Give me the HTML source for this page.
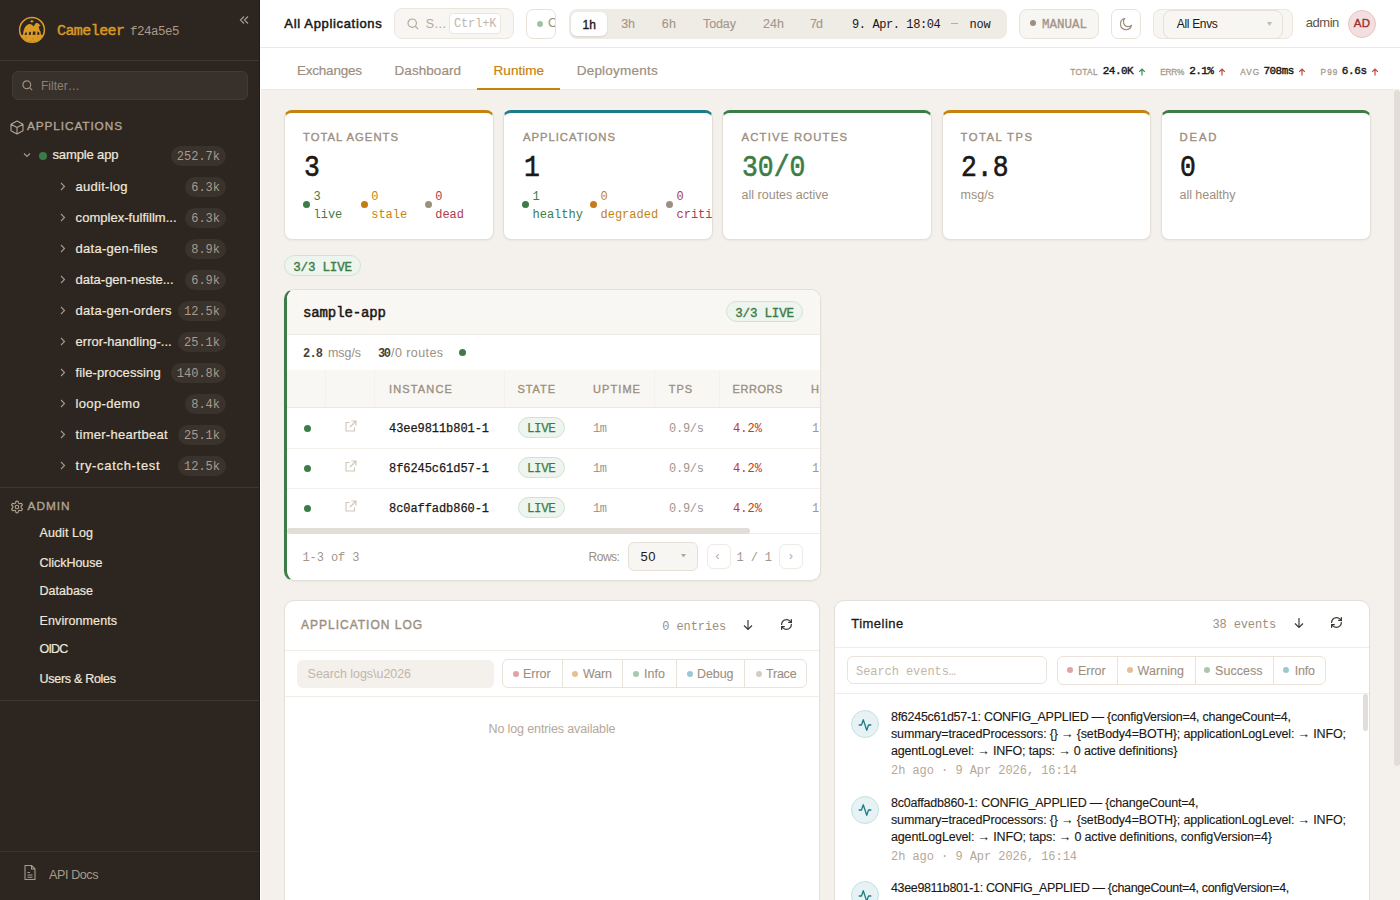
<!DOCTYPE html>
<html><head><meta charset="utf-8"><title>Cameleer Runtime</title>
<style>
*{box-sizing:border-box;margin:0;padding:0}
html,body{width:1400px;height:900px;overflow:hidden;background:#f4f1ec;font-family:"Liberation Sans",sans-serif;color:#1c1814;position:relative}
.t{position:absolute;white-space:nowrap}
.b{position:absolute}
svg{position:absolute;overflow:visible}
</style></head><body>
<div class="b" style="left:0px;top:0px;width:260px;height:900px;background:#2c2520"></div>
<div class="b" style="left:259px;top:0px;width:1px;height:900px;background:#221c18"></div>
<div class="b" style="left:0px;top:60px;width:259px;height:1px;background:#3e362f"></div>
<svg style="left:18px;top:16px" width="28" height="28" viewBox="18 16 28 28">
<defs><clipPath id="lc"><circle cx="32" cy="29.9" r="12"/></clipPath></defs>
<circle cx="32" cy="29.9" r="12.4" fill="none" stroke="#dc9b26" stroke-width="1.5"/>
<g clip-path="url(#lc)" fill="#dc9b26">
<rect x="18" y="34.8" width="28" height="10"/><g fill="#9c6a1a" opacity="0.55"><circle cx="26" cy="37.5" r="0.8"/><circle cx="33" cy="39" r="0.7"/><circle cx="37.5" cy="36.8" r="0.6"/><circle cx="29" cy="28" r="0.9"/><circle cx="35" cy="29.5" r="0.8"/><circle cx="31.5" cy="41" r="0.6"/></g>
<path d="M31.9 19.6 L32.9 21.1 L34.6 21.3 L32.9 21.7 L31.9 23 L31 21.7 L29.3 21.3 L31 21.1Z"/>
<path d="M23.2 33.5 C23.5 29 25.5 25.2 28.5 24.2 C30.8 23.6 32.6 25 33.6 26.4 C34.4 25.2 35.2 23.6 36.3 23 C37.6 22.6 38.5 23.4 39.4 24.4 L40.6 25.6 L39.6 26.3 L38.7 26.6 C38.9 28.4 39.6 30.2 40.5 31.6 L41 35.2 L39.5 35.2 L39.2 32.5 L37.6 31.2 L37.1 35.2 L35.5 35.2 L35.3 31.6 L33 31.6 L32.6 35.2 L31 35.2 L30.8 31.9 L29.2 31.8 L28.6 35.2 L27 35.2 L26.6 32 C25.4 32.4 24.6 33.5 24.6 35.2 L23 35.2Z"/>
</g>
</svg>
<span class="t" style="left:57.00px;top:23.60px;font:15px/1 'Liberation Mono',monospace;color:#d99a24;letter-spacing:-0.571px;-webkit-text-stroke:0.45px #d99a24">Cameleer</span>
<span class="t" style="left:130.00px;top:25.50px;font:12.5px/1 'Liberation Mono',monospace;color:#a99b8b;letter-spacing:-0.500px">f24a5e5</span>
<svg style="left:239px;top:15px" width="10" height="10" viewBox="0 0 10 10"><path d="M5 1.5 L1.5 5 L5 8.5 M9 1.5 L5.5 5 L9 8.5" fill="none" stroke="#a99b8b" stroke-width="1.2"/></svg>
<div class="b" style="left:12px;top:71px;width:236px;height:29px;background:#38312b;border:1px solid #433a33;border-radius:6px"></div>
<svg style="left:22px;top:80px" width="11" height="11" viewBox="0 0 11 11"><circle cx="4.8" cy="4.8" r="3.9" fill="none" stroke="#9d8f80" stroke-width="1.2"/><path d="M7.6 7.6 L10.2 10.2" stroke="#9d8f80" stroke-width="1.2"/></svg>
<span class="t" style="left:41.00px;top:80.00px;font:12px/1 'Liberation Sans',sans-serif;color:#8e8174">Filter…</span>
<svg style="left:10px;top:120px" width="14" height="15" viewBox="0 0 14 15"><path d="M7 1 L13 4.2 V10.8 L7 14 L1 10.8 V4.2 Z M1 4.2 L7 7.5 L13 4.2 M7 7.5 V14" fill="none" stroke="#b3a493" stroke-width="1.1" stroke-linejoin="round"/></svg>
<span class="t" style="left:27.00px;top:120.97px;font:11.8px/1 'Liberation Sans',sans-serif;color:#b3a493;letter-spacing:0.909px;-webkit-text-stroke:0.35px #b3a493">APPLICATIONS</span>
<svg style="left:23px;top:152px" width="8" height="6" viewBox="0 0 8 6"><path d="M1 1.5 L4 4.5 L7 1.5" fill="none" stroke="#a99b8b" stroke-width="1.1"/></svg>
<div class="b" style="left:39px;top:151.5px;width:8px;height:8px;background:#3b7b48;border-radius:50%"></div>
<span class="t" style="left:52.50px;top:148.45px;font:13px/1 'Liberation Sans',sans-serif;color:#efe7dc;letter-spacing:-0.133px;-webkit-text-stroke:0.2px #efe7dc">sample app</span>
<div class="b" style="left:171px;top:145.5px;width:55.2px;height:20px;background:#3a322c;border-radius:10px"></div>
<span class="t" style="left:176.80px;top:150.68px;font:12px/1 'Liberation Mono',monospace;color:#a99b8b">252.7k</span>
<svg style="left:60px;top:182.0px" width="6" height="9" viewBox="0 0 6 9"><path d="M1 1 L4.5 4.5 L1 8" fill="none" stroke="#a99b8b" stroke-width="1.1"/></svg>
<span class="t" style="left:75.60px;top:179.75px;font:13px/1 'Liberation Sans',sans-serif;color:#efe7dc;letter-spacing:0.263px;-webkit-text-stroke:0.2px #efe7dc">audit-log</span>
<div class="b" style="left:185px;top:176.5px;width:40.8px;height:20px;background:#3a322c;border-radius:10px"></div>
<span class="t" style="left:191.20px;top:181.68px;font:12px/1 'Liberation Mono',monospace;color:#a99b8b">6.3k</span>
<svg style="left:60px;top:213.0px" width="6" height="9" viewBox="0 0 6 9"><path d="M1 1 L4.5 4.5 L1 8" fill="none" stroke="#a99b8b" stroke-width="1.1"/></svg>
<span class="t" style="left:75.60px;top:210.75px;font:13px/1 'Liberation Sans',sans-serif;color:#efe7dc;letter-spacing:0.033px;-webkit-text-stroke:0.2px #efe7dc">complex-fulfillm...</span>
<div class="b" style="left:185px;top:207.5px;width:40.8px;height:20px;background:#3a322c;border-radius:10px"></div>
<span class="t" style="left:191.20px;top:212.68px;font:12px/1 'Liberation Mono',monospace;color:#a99b8b">6.3k</span>
<svg style="left:60px;top:244.0px" width="6" height="9" viewBox="0 0 6 9"><path d="M1 1 L4.5 4.5 L1 8" fill="none" stroke="#a99b8b" stroke-width="1.1"/></svg>
<span class="t" style="left:75.60px;top:241.75px;font:13px/1 'Liberation Sans',sans-serif;color:#efe7dc;letter-spacing:0.246px;-webkit-text-stroke:0.2px #efe7dc">data-gen-files</span>
<div class="b" style="left:185px;top:238.5px;width:40.8px;height:20px;background:#3a322c;border-radius:10px"></div>
<span class="t" style="left:191.20px;top:243.68px;font:12px/1 'Liberation Mono',monospace;color:#a99b8b">8.9k</span>
<svg style="left:60px;top:275.0px" width="6" height="9" viewBox="0 0 6 9"><path d="M1 1 L4.5 4.5 L1 8" fill="none" stroke="#a99b8b" stroke-width="1.1"/></svg>
<span class="t" style="left:75.60px;top:272.75px;font:13px/1 'Liberation Sans',sans-serif;color:#efe7dc;letter-spacing:-0.019px;-webkit-text-stroke:0.2px #efe7dc">data-gen-neste...</span>
<div class="b" style="left:185px;top:269.5px;width:40.8px;height:20px;background:#3a322c;border-radius:10px"></div>
<span class="t" style="left:191.20px;top:274.68px;font:12px/1 'Liberation Mono',monospace;color:#a99b8b">6.9k</span>
<svg style="left:60px;top:306.0px" width="6" height="9" viewBox="0 0 6 9"><path d="M1 1 L4.5 4.5 L1 8" fill="none" stroke="#a99b8b" stroke-width="1.1"/></svg>
<span class="t" style="left:75.60px;top:303.75px;font:13px/1 'Liberation Sans',sans-serif;color:#efe7dc;letter-spacing:0.250px;-webkit-text-stroke:0.2px #efe7dc">data-gen-orders</span>
<div class="b" style="left:178px;top:300.5px;width:48.0px;height:20px;background:#3a322c;border-radius:10px"></div>
<span class="t" style="left:184.00px;top:305.68px;font:12px/1 'Liberation Mono',monospace;color:#a99b8b">12.5k</span>
<svg style="left:60px;top:337.0px" width="6" height="9" viewBox="0 0 6 9"><path d="M1 1 L4.5 4.5 L1 8" fill="none" stroke="#a99b8b" stroke-width="1.1"/></svg>
<span class="t" style="left:75.60px;top:334.75px;font:13px/1 'Liberation Sans',sans-serif;color:#efe7dc;-webkit-text-stroke:0.2px #efe7dc">error-handling-...</span>
<div class="b" style="left:178px;top:331.5px;width:48.0px;height:20px;background:#3a322c;border-radius:10px"></div>
<span class="t" style="left:184.00px;top:336.68px;font:12px/1 'Liberation Mono',monospace;color:#a99b8b">25.1k</span>
<svg style="left:60px;top:368.0px" width="6" height="9" viewBox="0 0 6 9"><path d="M1 1 L4.5 4.5 L1 8" fill="none" stroke="#a99b8b" stroke-width="1.1"/></svg>
<span class="t" style="left:75.60px;top:365.75px;font:13px/1 'Liberation Sans',sans-serif;color:#efe7dc;letter-spacing:0.086px;-webkit-text-stroke:0.2px #efe7dc">file-processing</span>
<div class="b" style="left:171px;top:362.5px;width:55.2px;height:20px;background:#3a322c;border-radius:10px"></div>
<span class="t" style="left:176.80px;top:367.68px;font:12px/1 'Liberation Mono',monospace;color:#a99b8b">140.8k</span>
<svg style="left:60px;top:399.0px" width="6" height="9" viewBox="0 0 6 9"><path d="M1 1 L4.5 4.5 L1 8" fill="none" stroke="#a99b8b" stroke-width="1.1"/></svg>
<span class="t" style="left:75.60px;top:396.75px;font:13px/1 'Liberation Sans',sans-serif;color:#efe7dc;letter-spacing:0.325px;-webkit-text-stroke:0.2px #efe7dc">loop-demo</span>
<div class="b" style="left:185px;top:393.5px;width:40.8px;height:20px;background:#3a322c;border-radius:10px"></div>
<span class="t" style="left:191.20px;top:398.68px;font:12px/1 'Liberation Mono',monospace;color:#a99b8b">8.4k</span>
<svg style="left:60px;top:430.0px" width="6" height="9" viewBox="0 0 6 9"><path d="M1 1 L4.5 4.5 L1 8" fill="none" stroke="#a99b8b" stroke-width="1.1"/></svg>
<span class="t" style="left:75.60px;top:427.75px;font:13px/1 'Liberation Sans',sans-serif;color:#efe7dc;letter-spacing:0.271px;-webkit-text-stroke:0.2px #efe7dc">timer-heartbeat</span>
<div class="b" style="left:178px;top:424.5px;width:48.0px;height:20px;background:#3a322c;border-radius:10px"></div>
<span class="t" style="left:184.00px;top:429.68px;font:12px/1 'Liberation Mono',monospace;color:#a99b8b">25.1k</span>
<svg style="left:60px;top:461.0px" width="6" height="9" viewBox="0 0 6 9"><path d="M1 1 L4.5 4.5 L1 8" fill="none" stroke="#a99b8b" stroke-width="1.1"/></svg>
<span class="t" style="left:75.60px;top:458.75px;font:13px/1 'Liberation Sans',sans-serif;color:#efe7dc;letter-spacing:0.685px;-webkit-text-stroke:0.2px #efe7dc">try-catch-test</span>
<div class="b" style="left:178px;top:455.5px;width:48.0px;height:20px;background:#3a322c;border-radius:10px"></div>
<span class="t" style="left:184.00px;top:460.68px;font:12px/1 'Liberation Mono',monospace;color:#a99b8b">12.5k</span>
<div class="b" style="left:0px;top:487px;width:259px;height:1px;background:#3e362f"></div>
<svg style="left:9.5px;top:499.5px" width="14" height="14" viewBox="0 0 24 24"><g fill="none" stroke="#b3a493" stroke-width="1.9" stroke-linecap="round" stroke-linejoin="round"><path d="M12.22 2h-.44a2 2 0 0 0-2 2v.18a2 2 0 0 1-1 1.73l-.43.25a2 2 0 0 1-2 0l-.15-.08a2 2 0 0 0-2.73.73l-.22.38a2 2 0 0 0 .73 2.73l.15.1a2 2 0 0 1 1 1.72v.51a2 2 0 0 1-1 1.74l-.15.09a2 2 0 0 0-.73 2.730l.22.38a2 2 0 0 0 2.73.73l.15-.08a2 2 0 0 1 2 0l.43.25a2 2 0 0 1 1 1.73V20a2 2 0 0 0 2 2h.44a2 2 0 0 0 2-2v-.18a2 2 0 0 1 1-1.73l.43-.25a2 2 0 0 1 2 0l.15.08a2 2 0 0 0 2.73-.73l.22-.39a2 2 0 0 0-.73-2.73l-.15-.08a2 2 0 0 1-1-1.74v-.5a2 2 0 0 1 1-1.74l.15-.09a2 2 0 0 0 .73-2.73l-.22-.38a2 2 0 0 0-2.73-.73l-.15.08a2 2 0 0 1-2 0l-.43-.25a2 2 0 0 1-1-1.73V4a2 2 0 0 0-2-2z"/><circle cx="12" cy="12" r="3"/></g></svg>
<span class="t" style="left:27.60px;top:500.97px;font:11.8px/1 'Liberation Sans',sans-serif;color:#b3a493;letter-spacing:1.000px;-webkit-text-stroke:0.35px #b3a493">ADMIN</span>
<span class="t" style="left:39.60px;top:527.38px;font:12.5px/1 'Liberation Sans',sans-serif;color:#efe7dc;letter-spacing:0.075px;-webkit-text-stroke:0.2px #efe7dc">Audit Log</span>
<span class="t" style="left:39.60px;top:557.38px;font:12.5px/1 'Liberation Sans',sans-serif;color:#efe7dc;letter-spacing:-0.044px;-webkit-text-stroke:0.2px #efe7dc">ClickHouse</span>
<span class="t" style="left:39.60px;top:585.38px;font:12.5px/1 'Liberation Sans',sans-serif;color:#efe7dc;letter-spacing:-0.014px;-webkit-text-stroke:0.2px #efe7dc">Database</span>
<span class="t" style="left:39.60px;top:615.38px;font:12.5px/1 'Liberation Sans',sans-serif;color:#efe7dc;letter-spacing:0.091px;-webkit-text-stroke:0.2px #efe7dc">Environments</span>
<span class="t" style="left:39.60px;top:643.38px;font:12.5px/1 'Liberation Sans',sans-serif;color:#efe7dc;letter-spacing:-0.833px;-webkit-text-stroke:0.2px #efe7dc">OIDC</span>
<span class="t" style="left:39.60px;top:673.38px;font:12.5px/1 'Liberation Sans',sans-serif;color:#efe7dc;letter-spacing:-0.292px;-webkit-text-stroke:0.2px #efe7dc">Users &amp; Roles</span>
<div class="b" style="left:0px;top:700px;width:259px;height:1px;background:#3e362f"></div>
<div class="b" style="left:0px;top:851px;width:259px;height:1px;background:#3a322c"></div>
<svg style="left:23px;top:864px" width="14" height="17" viewBox="0 0 14 17"><path d="M2 1.5 H8.5 L12 5 V15.5 H2 Z M8.5 1.5 V5 H12 M4.5 8.5 H7 M4.5 11 H9.5 M4.5 13.3 H9.5" fill="none" stroke="#a99b8b" stroke-width="1.1" stroke-linejoin="round"/></svg>
<span class="t" style="left:49.00px;top:868.88px;font:12.5px/1 'Liberation Sans',sans-serif;color:#a99b8b;letter-spacing:-0.371px">API Docs</span>
<div class="b" style="left:260px;top:0px;width:1140px;height:47px;background:#fff"></div>
<div class="b" style="left:260px;top:47px;width:1140px;height:1px;background:#ede8e1"></div>
<div class="b" style="left:260px;top:48px;width:1140px;height:41px;background:#fff"></div>
<span class="t" style="left:284.30px;top:16.95px;font:13px/1 'Liberation Sans',sans-serif;color:#1c1814;letter-spacing:0.667px;-webkit-text-stroke:0.5px #1c1814">All Applications</span>
<div class="b" style="left:394px;top:8px;width:120px;height:31px;background:#f8f6f2;border:1px solid #ebe5dc;border-radius:8px"></div>
<svg style="left:407px;top:18px" width="12" height="12" viewBox="0 0 12 12"><circle cx="5.2" cy="5.2" r="4.2" fill="none" stroke="#b5a898" stroke-width="1.2"/><path d="M8.2 8.2 L11 11" stroke="#b5a898" stroke-width="1.2"/></svg>
<span class="t" style="left:425.70px;top:17.88px;font:12.5px/1 'Liberation Sans',sans-serif;color:#b5a898">S…</span>
<div class="b" style="left:449px;top:13px;width:52px;height:21px;background:#fff;border:1px solid #ebe5dc;border-radius:4px"></div>
<span class="t" style="left:454.00px;top:17.88px;font:12px/1 'Liberation Mono',monospace;color:#c2b6a8;letter-spacing:-0.140px">Ctrl+K</span>
<div class="b" style="left:526px;top:9px;width:30px;height:30px;background:#fff;border:1px solid #e8e2da;border-radius:7px;overflow:hidden"><div style="position:absolute;left:10px;top:10.5px;width:6px;height:6px;border-radius:50%;background:#9fc3a5"></div><span style="position:absolute;left:21px;top:7px;font:12.5px/1 'Liberation Sans';color:#9c8f80">O</span></div>
<div class="b" style="left:569px;top:9px;width:438px;height:30px;background:#efebe5;border-radius:8px"></div>
<div class="b" style="left:571px;top:12px;width:36px;height:24px;background:#fff;border-radius:6px;box-shadow:0 1px 2px rgba(60,40,20,.12)"></div>
<span class="t" style="left:582.50px;top:18.70px;font:12px/1 'Liberation Sans',sans-serif;color:#1c1814;-webkit-text-stroke:0.35px #1c1814">1h</span>
<span class="t" style="left:621.30px;top:18.27px;font:12.5px/1 'Liberation Sans',sans-serif;color:#a3968a;letter-spacing:-0.200px;-webkit-text-stroke:0.1px #a3968a">3h</span>
<span class="t" style="left:661.70px;top:18.27px;font:12.5px/1 'Liberation Sans',sans-serif;color:#a3968a;letter-spacing:0.400px;-webkit-text-stroke:0.1px #a3968a">6h</span>
<span class="t" style="left:703.00px;top:18.27px;font:12.5px/1 'Liberation Sans',sans-serif;color:#a3968a;letter-spacing:-0.100px;-webkit-text-stroke:0.1px #a3968a">Today</span>
<span class="t" style="left:763.00px;top:18.27px;font:12.5px/1 'Liberation Sans',sans-serif;color:#a3968a;letter-spacing:0.050px;-webkit-text-stroke:0.1px #a3968a">24h</span>
<span class="t" style="left:810.00px;top:18.27px;font:12.5px/1 'Liberation Sans',sans-serif;color:#a3968a;letter-spacing:-0.900px;-webkit-text-stroke:0.1px #a3968a">7d</span>
<span class="t" style="left:852.00px;top:19.18px;font:12px/1 'Liberation Mono',monospace;color:#1c1814;letter-spacing:-0.408px">9. Apr. 18:04</span>
<div class="b" style="left:951px;top:23px;width:7px;height:1px;background:#b9ada0"></div>
<span class="t" style="left:969.60px;top:19.18px;font:12px/1 'Liberation Mono',monospace;color:#1c1814;letter-spacing:-0.300px">now</span>
<div class="b" style="left:1019px;top:9px;width:80px;height:30px;background:#f8f6f2;border:1px solid #e8e2da;border-radius:8px"></div>
<div class="b" style="left:1030px;top:20px;width:6px;height:6px;background:#9c8f80;border-radius:50%"></div>
<span class="t" style="left:1042.00px;top:18.50px;font:12.5px/1 'Liberation Mono',monospace;color:#a3968a;-webkit-text-stroke:0.35px #a3968a">MANUAL</span>
<div class="b" style="left:1111px;top:9px;width:30px;height:30px;background:#fff;border:1px solid #e8e2da;border-radius:7px"></div>
<svg style="left:1119px;top:17px" width="14" height="14" viewBox="0 0 14 14"><path d="M12.5 8.3 A5.6 5.6 0 1 1 5.8 1.5 A4.4 4.4 0 0 0 12.5 8.3 Z" fill="none" stroke="#9c8f80" stroke-width="1.2" stroke-linejoin="round"/></svg>
<div class="b" style="left:1153px;top:8.5px;width:140px;height:30.3px;background:#f8f6f2;border:1px solid #ebe5dc;border-radius:8px"></div>
<div class="b" style="left:1163px;top:9.5px;width:120px;height:29.3px;background:#f8f6f2;border:1px solid #e6e0d7;border-radius:8px"></div>
<span class="t" style="left:1176.80px;top:17.80px;font:12px/1 'Liberation Sans',sans-serif;color:#1c1814;letter-spacing:-0.329px">All Envs</span>
<svg style="left:1266.7px;top:22.3px" width="5" height="4" viewBox="0 0 5 4"><path d="M0 0 H5 L2.5 4 Z" fill="#c4b9ad"/></svg>
<span class="t" style="left:1305.70px;top:16.45px;font:13px/1 'Liberation Sans',sans-serif;color:#5e544b;letter-spacing:-0.450px">admin</span>
<div class="b" style="left:1348px;top:10px;width:28px;height:28px;background:#f3dfdf;border:1px solid #e6c4c4;border-radius:50%"></div>
<span class="t" style="left:1353.80px;top:17.62px;font:11.5px/1 'Liberation Sans',sans-serif;color:#9b2f2f;letter-spacing:0.400px;-webkit-text-stroke:0.35px #9b2f2f">AD</span>
<span class="t" style="left:297.00px;top:64.03px;font:13.5px/1 'Liberation Sans',sans-serif;color:#9c8f80;letter-spacing:-0.225px;-webkit-text-stroke:0.2px #9c8f80">Exchanges</span>
<span class="t" style="left:394.50px;top:64.03px;font:13.5px/1 'Liberation Sans',sans-serif;color:#9c8f80;letter-spacing:0.062px;-webkit-text-stroke:0.2px #9c8f80">Dashboard</span>
<span class="t" style="left:493.60px;top:64.03px;font:13.5px/1 'Liberation Sans',sans-serif;color:#c6820e;letter-spacing:0.017px;-webkit-text-stroke:0.2px #c6820e">Runtime</span>
<span class="t" style="left:576.70px;top:64.03px;font:13.5px/1 'Liberation Sans',sans-serif;color:#9c8f80;letter-spacing:0.220px;-webkit-text-stroke:0.2px #9c8f80">Deployments</span>
<span class="t" style="left:1070.30px;top:67.64px;font:8.3px/1 'Liberation Sans',sans-serif;color:#a99b8b;letter-spacing:0.325px;-webkit-text-stroke:0.3px #a99b8b">TOTAL</span>
<span class="t" style="left:1102.70px;top:66.34px;font:11px/1 'Liberation Mono',monospace;color:#1c1814;letter-spacing:-0.500px;-webkit-text-stroke:0.4px #1c1814">24.0K</span>
<svg style="left:1138px;top:67.5px" width="8" height="8" viewBox="0 0 8 8"><path d="M4 7.5 V1 M1.2 3.8 L4 1 L6.8 3.8" fill="none" stroke="#3d8a5a" stroke-width="1.2"/></svg>
<span class="t" style="left:1160.20px;top:67.64px;font:8.3px/1 'Liberation Sans',sans-serif;color:#a99b8b;letter-spacing:-0.200px;-webkit-text-stroke:0.3px #a99b8b">ERR%</span>
<span class="t" style="left:1189.30px;top:66.34px;font:11px/1 'Liberation Mono',monospace;color:#1c1814;letter-spacing:-0.600px;-webkit-text-stroke:0.4px #1c1814">2.1%</span>
<svg style="left:1218px;top:67.5px" width="8" height="8" viewBox="0 0 8 8"><path d="M4 7.5 V1 M1.2 3.8 L4 1 L6.8 3.8" fill="none" stroke="#c0463a" stroke-width="1.2"/></svg>
<span class="t" style="left:1240.30px;top:67.64px;font:8.3px/1 'Liberation Sans',sans-serif;color:#a99b8b;letter-spacing:0.950px;-webkit-text-stroke:0.3px #a99b8b">AVG</span>
<span class="t" style="left:1263.40px;top:66.34px;font:11px/1 'Liberation Mono',monospace;color:#1c1814;letter-spacing:-0.500px;-webkit-text-stroke:0.4px #1c1814">708ms</span>
<svg style="left:1298px;top:67.5px" width="8" height="8" viewBox="0 0 8 8"><path d="M4 7.5 V1 M1.2 3.8 L4 1 L6.8 3.8" fill="none" stroke="#c0463a" stroke-width="1.2"/></svg>
<span class="t" style="left:1320.50px;top:67.64px;font:8.3px/1 'Liberation Sans',sans-serif;color:#a99b8b;letter-spacing:1.100px;-webkit-text-stroke:0.3px #a99b8b">P99</span>
<span class="t" style="left:1341.70px;top:66.34px;font:11px/1 'Liberation Mono',monospace;color:#1c1814;letter-spacing:-0.367px;-webkit-text-stroke:0.4px #1c1814">6.6s</span>
<svg style="left:1371px;top:67.5px" width="8" height="8" viewBox="0 0 8 8"><path d="M4 7.5 V1 M1.2 3.8 L4 1 L6.8 3.8" fill="none" stroke="#c0463a" stroke-width="1.2"/></svg>
<div class="b" style="left:260px;top:89px;width:1px;height:811px;background:#fff"></div>
<div class="b" style="left:261px;top:89px;width:1132px;height:811px;background:#f4f1ec"></div>
<div class="b" style="left:261px;top:89px;width:1132px;height:1px;background:#ede8e1"></div>
<div class="b" style="left:477px;top:88px;width:83px;height:2px;background:#c6820e"></div>
<div class="b" style="left:1394px;top:90px;width:6px;height:676px;background:#e2ddd6;border-radius:3px"></div>
<div class="b" style="left:284.0px;top:110px;width:209.8px;height:129.5px;background:#fff;border:1px solid #e3ded7;border-top:3px solid #c6820e;border-radius:8px;box-shadow:0 1px 2px rgba(60,40,20,.05)"></div>
<div class="b" style="left:503.2px;top:110px;width:209.8px;height:129.5px;background:#fff;border:1px solid #e3ded7;border-top:3px solid #1d7a89;border-radius:8px;box-shadow:0 1px 2px rgba(60,40,20,.05)"></div>
<div class="b" style="left:722.4px;top:110px;width:209.8px;height:129.5px;background:#fff;border:1px solid #e3ded7;border-top:3px solid #3d7c47;border-radius:8px;box-shadow:0 1px 2px rgba(60,40,20,.05)"></div>
<div class="b" style="left:941.6px;top:110px;width:209.8px;height:129.5px;background:#fff;border:1px solid #e3ded7;border-top:3px solid #c6820e;border-radius:8px;box-shadow:0 1px 2px rgba(60,40,20,.05)"></div>
<div class="b" style="left:1160.8px;top:110px;width:209.8px;height:129.5px;background:#fff;border:1px solid #e3ded7;border-top:3px solid #3d7c47;border-radius:8px;box-shadow:0 1px 2px rgba(60,40,20,.05)"></div>
<span class="t" style="left:303.00px;top:132.20px;font:11.3px/1 'Liberation Sans',sans-serif;color:#9c8f80;letter-spacing:1.009px;-webkit-text-stroke:0.35px #9c8f80">TOTAL AGENTS</span>
<span class="t" style="left:523.00px;top:132.20px;font:11.3px/1 'Liberation Sans',sans-serif;color:#9c8f80;letter-spacing:0.964px;-webkit-text-stroke:0.35px #9c8f80">APPLICATIONS</span>
<span class="t" style="left:741.50px;top:132.20px;font:11.3px/1 'Liberation Sans',sans-serif;color:#9c8f80;letter-spacing:1.208px;-webkit-text-stroke:0.35px #9c8f80">ACTIVE ROUTES</span>
<span class="t" style="left:960.50px;top:132.20px;font:11.3px/1 'Liberation Sans',sans-serif;color:#9c8f80;letter-spacing:1.450px;-webkit-text-stroke:0.35px #9c8f80">TOTAL TPS</span>
<span class="t" style="left:1179.50px;top:132.20px;font:11.3px/1 'Liberation Sans',sans-serif;color:#9c8f80;letter-spacing:1.867px;-webkit-text-stroke:0.35px #9c8f80">DEAD</span>
<span class="t" style="left:304.30px;top:154.33px;font:29.3px/1 'Liberation Mono',monospace;color:#1c1814;transform:scaleX(0.9);transform-origin:0.00px 0;-webkit-text-stroke:0.6px #1c1814">3</span>
<span class="t" style="left:523.50px;top:154.33px;font:29.3px/1 'Liberation Mono',monospace;color:#1c1814;transform:scaleX(0.9);transform-origin:0.00px 0;-webkit-text-stroke:0.6px #1c1814">1</span>
<span class="t" style="left:741.50px;top:154.33px;font:29.3px/1 'Liberation Mono',monospace;color:#3d7c47;transform:scaleX(0.9);transform-origin:0.00px 0;-webkit-text-stroke:0.6px #3d7c47">30/0</span>
<span class="t" style="left:960.50px;top:154.33px;font:29.3px/1 'Liberation Mono',monospace;color:#1c1814;transform:scaleX(0.9);transform-origin:0.00px 0;-webkit-text-stroke:0.6px #1c1814">2.8</span>
<span class="t" style="left:1180.00px;top:154.33px;font:29.3px/1 'Liberation Mono',monospace;color:#1c1814;transform:scaleX(0.9);transform-origin:0.00px 0;-webkit-text-stroke:0.6px #1c1814">0</span>
<span class="t" style="left:741.50px;top:189.18px;font:12.5px/1 'Liberation Sans',sans-serif;color:#9c8f80;letter-spacing:0.013px">all routes active</span>
<span class="t" style="left:960.50px;top:189.18px;font:12.5px/1 'Liberation Sans',sans-serif;color:#9c8f80;letter-spacing:0.050px">msg/s</span>
<span class="t" style="left:1179.50px;top:189.18px;font:12.5px/1 'Liberation Sans',sans-serif;color:#9c8f80;letter-spacing:-0.030px">all healthy</span>
<div class="b" style="left:303px;top:201px;width:7px;height:7px;background:#3d7c47;border-radius:50%"></div>
<span class="t" style="left:313.50px;top:190.88px;font:12px/1 'Liberation Mono',monospace;color:#3d7c47">3</span>
<span class="t" style="left:313.50px;top:208.88px;font:12px/1 'Liberation Mono',monospace;color:#3d7c47">live</span>
<div class="b" style="left:360.7px;top:201px;width:7px;height:7px;background:#c77a1a;border-radius:50%"></div>
<span class="t" style="left:371.20px;top:190.88px;font:12px/1 'Liberation Mono',monospace;color:#c6820e">0</span>
<span class="t" style="left:371.20px;top:208.88px;font:12px/1 'Liberation Mono',monospace;color:#c6820e">stale</span>
<div class="b" style="left:424.7px;top:201px;width:7px;height:7px;background:#9c8f80;border-radius:50%"></div>
<span class="t" style="left:435.20px;top:190.88px;font:12px/1 'Liberation Mono',monospace;color:#b03a4a">0</span>
<span class="t" style="left:435.20px;top:208.88px;font:12px/1 'Liberation Mono',monospace;color:#b03a4a">dead</span>
<div class="b" style="left:522px;top:201px;width:7px;height:7px;background:#3d7c47;border-radius:50%"></div>
<span class="t" style="left:532.50px;top:190.88px;font:12px/1 'Liberation Mono',monospace;color:#3d7c47">1</span>
<span class="t" style="left:532.50px;top:208.88px;font:12px/1 'Liberation Mono',monospace;color:#3d7c47">healthy</span>
<div class="b" style="left:590px;top:201px;width:7px;height:7px;background:#c77a1a;border-radius:50%"></div>
<span class="t" style="left:600.50px;top:190.88px;font:12px/1 'Liberation Mono',monospace;color:#c6820e">0</span>
<span class="t" style="left:600.50px;top:208.88px;font:12px/1 'Liberation Mono',monospace;color:#c6820e">degraded</span>
<div class="b" style="left:666px;top:201px;width:7px;height:7px;background:#9c8f80;border-radius:50%"></div>
<span class="t" style="left:676.50px;top:190.88px;font:12px/1 'Liberation Mono',monospace;color:#b03a4a">0</span>
<span class="t" style="left:676.50px;top:208.88px;font:12px/1 'Liberation Mono',monospace;color:#b03a4a">criti</span>
<div class="b" style="left:284px;top:255px;width:77px;height:21px;background:#edf5ee;border:1px solid #cfe3d2;border-radius:11px"></div>
<span class="t" style="left:293.30px;top:261.50px;font:12.5px/1 'Liberation Mono',monospace;color:#3d7c47;letter-spacing:-0.186px;-webkit-text-stroke:0.4px #3d7c47">3/3 LIVE</span>
<div class="b" style="left:284px;top:289px;width:536.5px;height:291.5px;background:#fff;border:1px solid #e3ded7;border-left:3px solid #3d7c47;border-radius:10px;overflow:hidden;box-shadow:0 1px 2px rgba(60,40,20,.05)"><div style="position:absolute;left:0;top:0;right:0;height:45px;background:#f9f7f4;border-bottom:1px solid #efeae4"></div><div style="position:absolute;left:0;top:80px;right:0;height:38px;background:#f9f7f4;border-bottom:1px solid #ece7e0"></div><div style="position:absolute;left:0;top:158px;right:0;height:1px;background:#f3efea"></div><div style="position:absolute;left:0;top:198px;right:0;height:1px;background:#f3efea"></div><div style="position:absolute;left:0;top:243px;right:0;height:1px;background:#f1ece6"></div><div style="position:absolute;left:0;top:237.5px;width:463px;height:6px;background:#e2ddd6;border-radius:3px"></div></div>
<span class="t" style="left:303.00px;top:306.36px;font:14px/1 'Liberation Mono',monospace;color:#1c1814;letter-spacing:-0.111px;-webkit-text-stroke:0.5px #1c1814">sample-app</span>
<div class="b" style="left:726px;top:301px;width:77px;height:21px;background:#edf5ee;border:1px solid #cfe3d2;border-radius:11px"></div>
<span class="t" style="left:735.30px;top:307.50px;font:12.5px/1 'Liberation Mono',monospace;color:#3d7c47;letter-spacing:-0.186px;-webkit-text-stroke:0.4px #3d7c47">3/3 LIVE</span>
<span class="t" style="left:303.00px;top:348.38px;font:bold 12px/1 'Liberation Mono',monospace;color:#4a4038;letter-spacing:-0.800px">2.8</span>
<span class="t" style="left:328.00px;top:346.88px;font:12.5px/1 'Liberation Sans',sans-serif;color:#9c8f80;letter-spacing:-0.075px">msg/s</span>
<span class="t" style="left:378.00px;top:348.38px;font:bold 12px/1 'Liberation Mono',monospace;color:#4a4038;letter-spacing:-1.400px">30</span>
<span class="t" style="left:391.00px;top:346.88px;font:12.5px/1 'Liberation Sans',sans-serif;color:#9c8f80;letter-spacing:0.425px">/0 routes</span>
<div class="b" style="left:459px;top:349px;width:7px;height:7px;background:#3d7c47;border-radius:50%"></div>
<div class="b" style="left:325px;top:370px;width:1px;height:37px;background:#f4f1ed"></div>
<div class="b" style="left:374px;top:370px;width:1px;height:37px;background:#f4f1ed"></div>
<div class="b" style="left:503.5px;top:370px;width:1px;height:37px;background:#f4f1ed"></div>
<div class="b" style="left:654px;top:370px;width:1px;height:37px;background:#f4f1ed"></div>
<div class="b" style="left:718.5px;top:370px;width:1px;height:37px;background:#f4f1ed"></div>
<span class="t" style="left:389.00px;top:383.75px;font:11px/1 'Liberation Sans',sans-serif;color:#9c8f80;letter-spacing:1.143px;-webkit-text-stroke:0.35px #9c8f80">INSTANCE</span>
<span class="t" style="left:517.50px;top:383.75px;font:11px/1 'Liberation Sans',sans-serif;color:#9c8f80;letter-spacing:0.925px;-webkit-text-stroke:0.35px #9c8f80">STATE</span>
<span class="t" style="left:593.00px;top:383.75px;font:11px/1 'Liberation Sans',sans-serif;color:#9c8f80;letter-spacing:1.080px;-webkit-text-stroke:0.35px #9c8f80">UPTIME</span>
<span class="t" style="left:668.75px;top:383.75px;font:11px/1 'Liberation Sans',sans-serif;color:#9c8f80;letter-spacing:0.950px;-webkit-text-stroke:0.35px #9c8f80">TPS</span>
<span class="t" style="left:732.50px;top:383.75px;font:11px/1 'Liberation Sans',sans-serif;color:#9c8f80;letter-spacing:0.580px;-webkit-text-stroke:0.35px #9c8f80">ERRORS</span>
<span class="t" style="left:811.00px;top:383.75px;font:11px/1 'Liberation Sans',sans-serif;color:#9c8f80;-webkit-text-stroke:0.35px #9c8f80">H</span>
<div class="b" style="left:303.6px;top:424.5px;width:7px;height:7px;background:#3d7c47;border-radius:50%"></div>
<svg style="left:343.5px;top:420px" width="13" height="13" viewBox="0 0 13 13"><path d="M5.5 2.5 H2 V11 H10.5 V7.5 M7.5 1 H12 V5.5 M12 1 L6 7" fill="none" stroke="#cfc5ba" stroke-width="1.1"/></svg>
<span class="t" style="left:389.00px;top:423.38px;font:12px/1 'Liberation Mono',monospace;color:#1c1814;letter-spacing:-0.062px;-webkit-text-stroke:0.25px #1c1814">43ee9811b801-1</span>
<div class="b" style="left:517.7px;top:417.3px;width:47px;height:21px;background:#edf5ee;border:1px solid #cfe3d2;border-radius:11px"></div>
<span class="t" style="left:527.00px;top:423.10px;font:12.5px/1 'Liberation Mono',monospace;color:#3d7c47;letter-spacing:-0.433px;-webkit-text-stroke:0.25px #3d7c47">LIVE</span>
<span class="t" style="left:593.00px;top:423.38px;font:12px/1 'Liberation Mono',monospace;color:#a3968a;letter-spacing:-0.400px">1m</span>
<span class="t" style="left:669.00px;top:423.38px;font:12px/1 'Liberation Mono',monospace;color:#a3968a;letter-spacing:-0.250px">0.9/s</span>
<span class="t" style="left:733.00px;top:423.38px;font:12px/1 'Liberation Mono',monospace;color:#c0392b;letter-spacing:0.033px">4.2%</span>
<span class="t" style="left:812.00px;top:423.38px;font:12px/1 'Liberation Mono',monospace;color:#a3968a">1</span>
<div class="b" style="left:303.6px;top:464.5px;width:7px;height:7px;background:#3d7c47;border-radius:50%"></div>
<svg style="left:343.5px;top:460px" width="13" height="13" viewBox="0 0 13 13"><path d="M5.5 2.5 H2 V11 H10.5 V7.5 M7.5 1 H12 V5.5 M12 1 L6 7" fill="none" stroke="#cfc5ba" stroke-width="1.1"/></svg>
<span class="t" style="left:389.00px;top:463.38px;font:12px/1 'Liberation Mono',monospace;color:#1c1814;letter-spacing:-0.062px;-webkit-text-stroke:0.25px #1c1814">8f6245c61d57-1</span>
<div class="b" style="left:517.7px;top:457.3px;width:47px;height:21px;background:#edf5ee;border:1px solid #cfe3d2;border-radius:11px"></div>
<span class="t" style="left:527.00px;top:463.10px;font:12.5px/1 'Liberation Mono',monospace;color:#3d7c47;letter-spacing:-0.433px;-webkit-text-stroke:0.25px #3d7c47">LIVE</span>
<span class="t" style="left:593.00px;top:463.38px;font:12px/1 'Liberation Mono',monospace;color:#a3968a;letter-spacing:-0.400px">1m</span>
<span class="t" style="left:669.00px;top:463.38px;font:12px/1 'Liberation Mono',monospace;color:#a3968a;letter-spacing:-0.250px">0.9/s</span>
<span class="t" style="left:733.00px;top:463.38px;font:12px/1 'Liberation Mono',monospace;color:#c0392b;letter-spacing:0.033px">4.2%</span>
<span class="t" style="left:812.00px;top:463.38px;font:12px/1 'Liberation Mono',monospace;color:#a3968a">1</span>
<div class="b" style="left:303.6px;top:504.5px;width:7px;height:7px;background:#3d7c47;border-radius:50%"></div>
<svg style="left:343.5px;top:500px" width="13" height="13" viewBox="0 0 13 13"><path d="M5.5 2.5 H2 V11 H10.5 V7.5 M7.5 1 H12 V5.5 M12 1 L6 7" fill="none" stroke="#cfc5ba" stroke-width="1.1"/></svg>
<span class="t" style="left:389.00px;top:503.38px;font:12px/1 'Liberation Mono',monospace;color:#1c1814;letter-spacing:-0.062px;-webkit-text-stroke:0.25px #1c1814">8c0affadb860-1</span>
<div class="b" style="left:517.7px;top:497.3px;width:47px;height:21px;background:#edf5ee;border:1px solid #cfe3d2;border-radius:11px"></div>
<span class="t" style="left:527.00px;top:503.10px;font:12.5px/1 'Liberation Mono',monospace;color:#3d7c47;letter-spacing:-0.433px;-webkit-text-stroke:0.25px #3d7c47">LIVE</span>
<span class="t" style="left:593.00px;top:503.38px;font:12px/1 'Liberation Mono',monospace;color:#a3968a;letter-spacing:-0.400px">1m</span>
<span class="t" style="left:669.00px;top:503.38px;font:12px/1 'Liberation Mono',monospace;color:#a3968a;letter-spacing:-0.250px">0.9/s</span>
<span class="t" style="left:733.00px;top:503.38px;font:12px/1 'Liberation Mono',monospace;color:#c0392b;letter-spacing:0.033px">4.2%</span>
<span class="t" style="left:812.00px;top:503.38px;font:12px/1 'Liberation Mono',monospace;color:#a3968a">1</span>
<div class="b" style="left:284px;top:580px;width:536px;height:1px;"></div>
<span class="t" style="left:302.50px;top:552.18px;font:12px/1 'Liberation Mono',monospace;color:#a3968a;letter-spacing:-0.086px">1-3 of 3</span>
<span class="t" style="left:588.60px;top:550.80px;font:12px/1 'Liberation Sans',sans-serif;color:#9c8f80;letter-spacing:-0.525px">Rows:</span>
<div class="b" style="left:628px;top:542px;width:70px;height:29px;background:#f8f6f2;border:1px solid #e6e0d7;border-radius:6px"></div>
<span class="t" style="left:640.60px;top:550.25px;font:13px/1 'Liberation Sans',sans-serif;color:#1c1814;letter-spacing:0.500px">50</span>
<svg style="left:681px;top:554px" width="5" height="4" viewBox="0 0 5 4"><path d="M0 0 H5 L2.5 3.5 Z" fill="#b5a898"/></svg>
<div class="b" style="left:706.5px;top:544px;width:24px;height:25px;background:#fff;border:1px solid #efeae4;border-radius:6px"></div>
<span class="t" style="left:715.50px;top:549.80px;font:12px/1 'Liberation Sans',sans-serif;color:#b5a898">‹</span>
<span class="t" style="left:736.50px;top:552.18px;font:12px/1 'Liberation Mono',monospace;color:#a3968a;letter-spacing:-0.125px">1 / 1</span>
<div class="b" style="left:779px;top:544px;width:24px;height:25px;background:#fff;border:1px solid #efeae4;border-radius:6px"></div>
<span class="t" style="left:789.00px;top:549.80px;font:12px/1 'Liberation Sans',sans-serif;color:#b5a898">›</span>
<div class="b" style="left:284px;top:599.6px;width:536px;height:320px;background:#fff;border:1px solid #e3ded7;border-radius:10px;overflow:hidden"><div style="position:absolute;left:0;top:49px;right:0;height:1px;background:#f1ece6"></div><div style="position:absolute;left:0;top:95px;right:0;height:1px;background:#f1ece6"></div></div>
<span class="t" style="left:301.00px;top:618.80px;font:12px/1 'Liberation Sans',sans-serif;color:#9c8f80;letter-spacing:0.993px;-webkit-text-stroke:0.4px #9c8f80">APPLICATION LOG</span>
<span class="t" style="left:662.30px;top:620.88px;font:12px/1 'Liberation Mono',monospace;color:#9c8f80;letter-spacing:-0.100px">0 entries</span>
<svg style="left:742px;top:619px" width="12" height="12" viewBox="0 0 12 12"><path d="M6 1 V10.5 M2 6.5 L6 10.5 L10 6.5" fill="none" stroke="#3d352e" stroke-width="1.15"/></svg>
<svg style="left:780px;top:617.5px" width="13" height="13" viewBox="0 0 13 13"><g transform="scale(0.54)" fill="none" stroke="#3d352e" stroke-width="2.3" stroke-linecap="round" stroke-linejoin="round"><path d="M3 12a9 9 0 0 1 9-9 9.75 9.75 0 0 1 6.74 2.74L21 8"/><path d="M21 3v5h-5"/><path d="M21 12a9 9 0 0 1-9 9 9.75 9.75 0 0 1-6.74-2.74L3 16"/><path d="M8 16H3v5"/></g></svg>
<div class="b" style="left:297px;top:660px;width:197px;height:28px;background:#f4f1ec;border-radius:6px"></div>
<span class="t" style="left:307.60px;top:668.38px;font:12.5px/1 'Liberation Sans',sans-serif;color:#c2b6a8;letter-spacing:-0.050px">Search logs\u2026</span>
<div class="b" style="left:502px;top:659px;width:305px;height:29px;background:#fff;border:1px solid #e9e3db;border-radius:6px"></div>
<div class="b" style="left:512.5px;top:670.5px;width:6px;height:6px;background:#e0a3a3;border-radius:50%"></div>
<span class="t" style="left:523.00px;top:668.38px;font:12.5px/1 'Liberation Sans',sans-serif;color:#9c8f80;letter-spacing:-0.025px;-webkit-text-stroke:0.1px #9c8f80">Error</span>
<div class="b" style="left:572px;top:670.5px;width:6px;height:6px;background:#e6c095;border-radius:50%"></div>
<span class="t" style="left:583.00px;top:668.38px;font:12.5px/1 'Liberation Sans',sans-serif;color:#9c8f80;letter-spacing:-0.133px;-webkit-text-stroke:0.1px #9c8f80">Warn</span>
<div class="b" style="left:633px;top:670.5px;width:6px;height:6px;background:#a9c8ab;border-radius:50%"></div>
<span class="t" style="left:644.00px;top:668.38px;font:12.5px/1 'Liberation Sans',sans-serif;color:#9c8f80;letter-spacing:0.033px;-webkit-text-stroke:0.1px #9c8f80">Info</span>
<div class="b" style="left:687px;top:670.5px;width:6px;height:6px;background:#9cc8d4;border-radius:50%"></div>
<span class="t" style="left:697.00px;top:668.38px;font:12.5px/1 'Liberation Sans',sans-serif;color:#9c8f80;letter-spacing:-0.075px;-webkit-text-stroke:0.1px #9c8f80">Debug</span>
<div class="b" style="left:755.5px;top:670.5px;width:6px;height:6px;background:#d3ccc5;border-radius:50%"></div>
<span class="t" style="left:766.00px;top:668.38px;font:12.5px/1 'Liberation Sans',sans-serif;color:#9c8f80;letter-spacing:-0.225px;-webkit-text-stroke:0.1px #9c8f80">Trace</span>
<div class="b" style="left:561.8px;top:660px;width:1px;height:27px;background:#e9e3db"></div>
<div class="b" style="left:622px;top:660px;width:1px;height:27px;background:#e9e3db"></div>
<div class="b" style="left:675.7px;top:660px;width:1px;height:27px;background:#e9e3db"></div>
<div class="b" style="left:743.6px;top:660px;width:1px;height:27px;background:#e9e3db"></div>
<span class="t" style="left:488.50px;top:722.88px;font:12.5px/1 'Liberation Sans',sans-serif;color:#b5a898;letter-spacing:-0.126px">No log entries available</span>
<div class="b" style="left:833.6px;top:599.6px;width:536px;height:320px;background:#fff;border:1px solid #e3ded7;border-radius:10px;overflow:hidden"><div style="position:absolute;left:0;top:46px;right:0;height:1px;background:#f1ece6"></div><div style="position:absolute;left:0;top:92px;right:0;height:1px;background:#f1ece6"></div><div style="position:absolute;left:528.5px;top:93px;width:5px;height:37px;background:#e2ddd6;border-radius:3px"></div></div>
<span class="t" style="left:851.20px;top:617.15px;font:13px/1 'Liberation Sans',sans-serif;color:#1c1814;letter-spacing:0.486px;-webkit-text-stroke:0.3px #1c1814">Timeline</span>
<span class="t" style="left:1212.50px;top:619.18px;font:12px/1 'Liberation Mono',monospace;color:#9c8f80;letter-spacing:-0.137px">38 events</span>
<svg style="left:1292.5px;top:617px" width="12" height="12" viewBox="0 0 12 12"><path d="M6 1 V10.5 M2 6.5 L6 10.5 L10 6.5" fill="none" stroke="#3d352e" stroke-width="1.15"/></svg>
<svg style="left:1330px;top:615.5px" width="13" height="13" viewBox="0 0 13 13"><g transform="scale(0.54)" fill="none" stroke="#3d352e" stroke-width="2.3" stroke-linecap="round" stroke-linejoin="round"><path d="M3 12a9 9 0 0 1 9-9 9.75 9.75 0 0 1 6.74 2.74L21 8"/><path d="M21 3v5h-5"/><path d="M21 12a9 9 0 0 1-9 9 9.75 9.75 0 0 1-6.74-2.74L3 16"/><path d="M8 16H3v5"/></g></svg>
<div class="b" style="left:847px;top:656px;width:200px;height:28px;background:#fff;border:1px solid #e9e3db;border-radius:6px"></div>
<span class="t" style="left:856.00px;top:665.88px;font:12px/1 'Liberation Mono',monospace;color:#c2b6a8;letter-spacing:-0.062px">Search events…</span>
<div class="b" style="left:1057px;top:655.5px;width:269px;height:29px;background:#fff;border:1px solid #e9e3db;border-radius:6px"></div>
<div class="b" style="left:1066.5px;top:667.0px;width:6px;height:6px;background:#e0a3a3;border-radius:50%"></div>
<span class="t" style="left:1078.00px;top:664.88px;font:12.5px/1 'Liberation Sans',sans-serif;color:#9c8f80;letter-spacing:-0.025px;-webkit-text-stroke:0.1px #9c8f80">Error</span>
<div class="b" style="left:1126.5px;top:667.0px;width:6px;height:6px;background:#e6c095;border-radius:50%"></div>
<span class="t" style="left:1137.50px;top:664.88px;font:12.5px/1 'Liberation Sans',sans-serif;color:#9c8f80;letter-spacing:0.067px;-webkit-text-stroke:0.1px #9c8f80">Warning</span>
<div class="b" style="left:1204px;top:667.0px;width:6px;height:6px;background:#a9c8ab;border-radius:50%"></div>
<span class="t" style="left:1215.00px;top:664.88px;font:12.5px/1 'Liberation Sans',sans-serif;color:#9c8f80;letter-spacing:0.050px;-webkit-text-stroke:0.1px #9c8f80">Success</span>
<div class="b" style="left:1283px;top:667.0px;width:6px;height:6px;background:#9cc8d4;border-radius:50%"></div>
<span class="t" style="left:1294.70px;top:664.88px;font:12.5px/1 'Liberation Sans',sans-serif;color:#9c8f80;letter-spacing:-0.200px;-webkit-text-stroke:0.1px #9c8f80">Info</span>
<div class="b" style="left:1116.7px;top:656.5px;width:1px;height:27px;background:#e9e3db"></div>
<div class="b" style="left:1194.5px;top:656.5px;width:1px;height:27px;background:#e9e3db"></div>
<div class="b" style="left:1273px;top:656.5px;width:1px;height:27px;background:#e9e3db"></div>
<div class="b" style="left:851px;top:710.0px;width:28px;height:28px;background:#e6f2f3;border:1px solid #c6e0e3;border-radius:50%"></div>
<svg style="left:858px;top:717.5px" width="14" height="14" viewBox="0 0 24 24"><path d="M22 12h-4l-3 9L9 3l-3 9H2" fill="none" stroke="#1d7a89" stroke-width="2.2" stroke-linecap="round" stroke-linejoin="round"/></svg>
<span class="t" style="left:891.00px;top:711.17px;font:12.5px/1 'Liberation Sans',sans-serif;color:#1c1814;letter-spacing:-0.275px;-webkit-text-stroke:0.12px #1c1814">8f6245c61d57-1: CONFIG_APPLIED — {configVersion=4, changeCount=4,</span>
<span class="t" style="left:891.00px;top:728.17px;font:12.5px/1 'Liberation Sans',sans-serif;color:#1c1814;letter-spacing:-0.159px;-webkit-text-stroke:0.12px #1c1814">summary=tracedProcessors: {} → {setBody4=BOTH}; applicationLogLevel: → INFO;</span>
<span class="t" style="left:891.00px;top:745.17px;font:12.5px/1 'Liberation Sans',sans-serif;color:#1c1814;letter-spacing:-0.176px;-webkit-text-stroke:0.12px #1c1814">agentLogLevel: → INFO; taps: → 0 active definitions}</span>
<span class="t" style="left:891.00px;top:765.28px;font:12px/1 'Liberation Mono',monospace;color:#b5a898;letter-spacing:-0.048px">2h ago · 9 Apr 2026, 16:14</span>
<div class="b" style="left:851px;top:795.5px;width:28px;height:28px;background:#e6f2f3;border:1px solid #c6e0e3;border-radius:50%"></div>
<svg style="left:858px;top:803.0px" width="14" height="14" viewBox="0 0 24 24"><path d="M22 12h-4l-3 9L9 3l-3 9H2" fill="none" stroke="#1d7a89" stroke-width="2.2" stroke-linecap="round" stroke-linejoin="round"/></svg>
<span class="t" style="left:891.00px;top:796.67px;font:12.5px/1 'Liberation Sans',sans-serif;color:#1c1814;letter-spacing:-0.217px;-webkit-text-stroke:0.12px #1c1814">8c0affadb860-1: CONFIG_APPLIED — {changeCount=4,</span>
<span class="t" style="left:891.00px;top:813.67px;font:12.5px/1 'Liberation Sans',sans-serif;color:#1c1814;letter-spacing:-0.159px;-webkit-text-stroke:0.12px #1c1814">summary=tracedProcessors: {} → {setBody4=BOTH}; applicationLogLevel: → INFO;</span>
<span class="t" style="left:891.00px;top:830.67px;font:12.5px/1 'Liberation Sans',sans-serif;color:#1c1814;letter-spacing:-0.157px;-webkit-text-stroke:0.12px #1c1814">agentLogLevel: → INFO; taps: → 0 active definitions, configVersion=4}</span>
<span class="t" style="left:891.00px;top:850.78px;font:12px/1 'Liberation Mono',monospace;color:#b5a898;letter-spacing:-0.048px">2h ago · 9 Apr 2026, 16:14</span>
<div class="b" style="left:851px;top:881.0px;width:28px;height:28px;background:#e6f2f3;border:1px solid #c6e0e3;border-radius:50%"></div>
<svg style="left:858px;top:888.5px" width="14" height="14" viewBox="0 0 24 24"><path d="M22 12h-4l-3 9L9 3l-3 9H2" fill="none" stroke="#1d7a89" stroke-width="2.2" stroke-linecap="round" stroke-linejoin="round"/></svg>
<span class="t" style="left:891.00px;top:882.17px;font:12.5px/1 'Liberation Sans',sans-serif;color:#1c1814;letter-spacing:-0.353px;-webkit-text-stroke:0.12px #1c1814">43ee9811b801-1: CONFIG_APPLIED — {changeCount=4, configVersion=4,</span>
<span class="t" style="left:891.00px;top:899.17px;font:12.5px/1 'Liberation Sans',sans-serif;color:#1c1814;letter-spacing:-0.159px;-webkit-text-stroke:0.12px #1c1814">summary=tracedProcessors: {} → {setBody4=BOTH}; applicationLogLevel: → INFO;</span>
</body></html>
